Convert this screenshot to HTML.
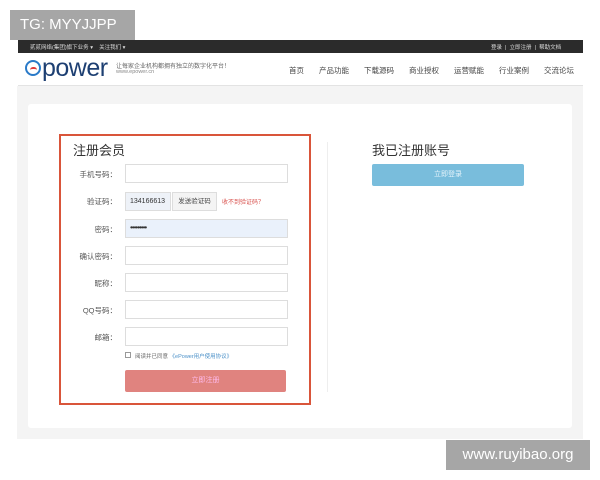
<!DOCTYPE html>
<html><head><meta charset="utf-8"><style>
*{margin:0;padding:0;box-sizing:border-box}
body{width:600px;height:480px;background:#fff;position:relative;overflow:hidden;font-family:"Liberation Sans","Noto Sans CJK SC",sans-serif;color:#333}
.a{position:absolute}
.inp{position:absolute;left:125px;width:163px;height:19px;border:1px solid #ddd;background:#fff}
.lbl{position:absolute;right:483px;font-size:7.5px;color:#555;text-align:right;white-space:nowrap}
.nav span{margin-left:0;position:absolute;font-size:7.5px;color:#444;top:65px}
</style></head><body>
<div class="a" style="left:18px;top:40px;width:565px;height:13px;background:#2b2b2b"></div>
<div class="a" style="left:30px;top:43px;font-size:5.5px;color:#ddd">贰贰网络(集团)旗下业务 ▾ &nbsp;&nbsp; 关注我们 ▾</div>
<div class="a" style="left:491px;top:43px;font-size:5.5px;color:#ddd">登录 &nbsp;| &nbsp;立即注册 &nbsp;| &nbsp;帮助文档</div>
<div class="a" style="left:18px;top:53px;width:565px;height:33px;background:#fff;border-bottom:1px solid #e3e3e3"></div>
<div class="a" style="left:25px;top:60px;width:16px;height:16px;border-radius:50%;border:2.5px solid #2a7ac8"></div>
<div class="a" style="left:30px;top:67px;width:7px;height:3px;border-top:2px solid #e03a3a;border-radius:4px 4px 0 0"></div>
<div class="a" style="left:42px;top:54px;font-size:25px;color:#1d3f72;letter-spacing:-0.5px;font-family:'Liberation Sans',sans-serif">power</div>
<div class="a" style="left:116px;top:61px;font-size:6px;color:#666">让每家企业机构都拥有独立的数字化平台！</div>
<div class="a" style="left:116px;top:69px;font-size:5.5px;color:#888">www.epower.cn</div>
<div class="nav"><span style="left:289px">首页</span><span style="left:319px">产品功能</span><span style="left:364px">下载源码</span><span style="left:409px">商业授权</span><span style="left:454px">运营赋能</span><span style="left:499px">行业案例</span><span style="left:544px">交流论坛</span></div>
<div class="a" style="left:17px;top:86px;width:566px;height:353px;background:#f4f4f4"></div>
<div class="a" style="left:28px;top:104px;width:544px;height:324px;background:#fff;border-radius:3px"></div>
<div class="a" style="left:59px;top:134px;width:252px;height:271px;border:2px solid #d9553a"></div>
<div class="a" style="left:327px;top:142px;width:1px;height:250px;background:#eee"></div>
<div class="a" style="left:73px;top:140px;font-size:13px;color:#333">注册会员</div>
<div class="lbl" style="top:169px">手机号码：</div><div class="inp" style="top:164px"></div>
<div class="lbl" style="top:196px">验证码：</div>
<div class="inp" style="top:192px;width:46px;background:#eef2f8;font-size:7px;padding:5px 4px;color:#333">134166613</div>
<div class="a" style="left:172px;top:192px;width:45px;height:19px;border:1px solid #ddd;background:#f4f4f4;font-size:6.5px;text-align:center;line-height:17px;color:#444">发送验证码</div>
<div class="a" style="left:222px;top:197px;font-size:6px;color:#d9534f">收不到验证码？</div>
<div class="lbl" style="top:224px">密码：</div><div class="inp" style="top:219px;background:#eaf1fb;font-size:8px;padding:3px 4px;letter-spacing:-1px">•••••••••</div>
<div class="lbl" style="top:251px">确认密码：</div><div class="inp" style="top:246px"></div>
<div class="lbl" style="top:278px">昵称：</div><div class="inp" style="top:273px"></div>
<div class="lbl" style="top:305px">QQ号码：</div><div class="inp" style="top:300px"></div>
<div class="lbl" style="top:332px">邮箱：</div><div class="inp" style="top:327px"></div>
<div class="a" style="left:125px;top:352px;width:6px;height:6px;border:1px solid #999"></div>
<div class="a" style="left:135px;top:352px;font-size:5.5px;color:#666">阅读并已同意 <span style="color:#4a90c8">《ePower用户使用协议》</span></div>
<div class="a" style="left:125px;top:370px;width:161px;height:22px;background:#e0837f;border-radius:2px;color:#fbe;font-size:7px;text-align:center;line-height:22px">立即注册</div>
<div class="a" style="left:372px;top:140px;font-size:13px;color:#333">我已注册账号</div>
<div class="a" style="left:372px;top:164px;width:152px;height:22px;background:#79bddc;border-radius:2px;color:#e6f4fb;font-size:7px;text-align:center;line-height:22px">立即登录</div>
<div class="a" style="left:10px;top:10px;width:125px;height:30px;background:#a6a6a6;color:#fff;font-size:15px;line-height:30px;padding-left:10px">TG: MYYJJPP</div>
<div class="a" style="left:446px;top:440px;width:144px;height:30px;background:#a6a6a6;color:#fff;font-size:15px;line-height:30px;text-align:center">www.ruyibao.org</div>
</body></html>
